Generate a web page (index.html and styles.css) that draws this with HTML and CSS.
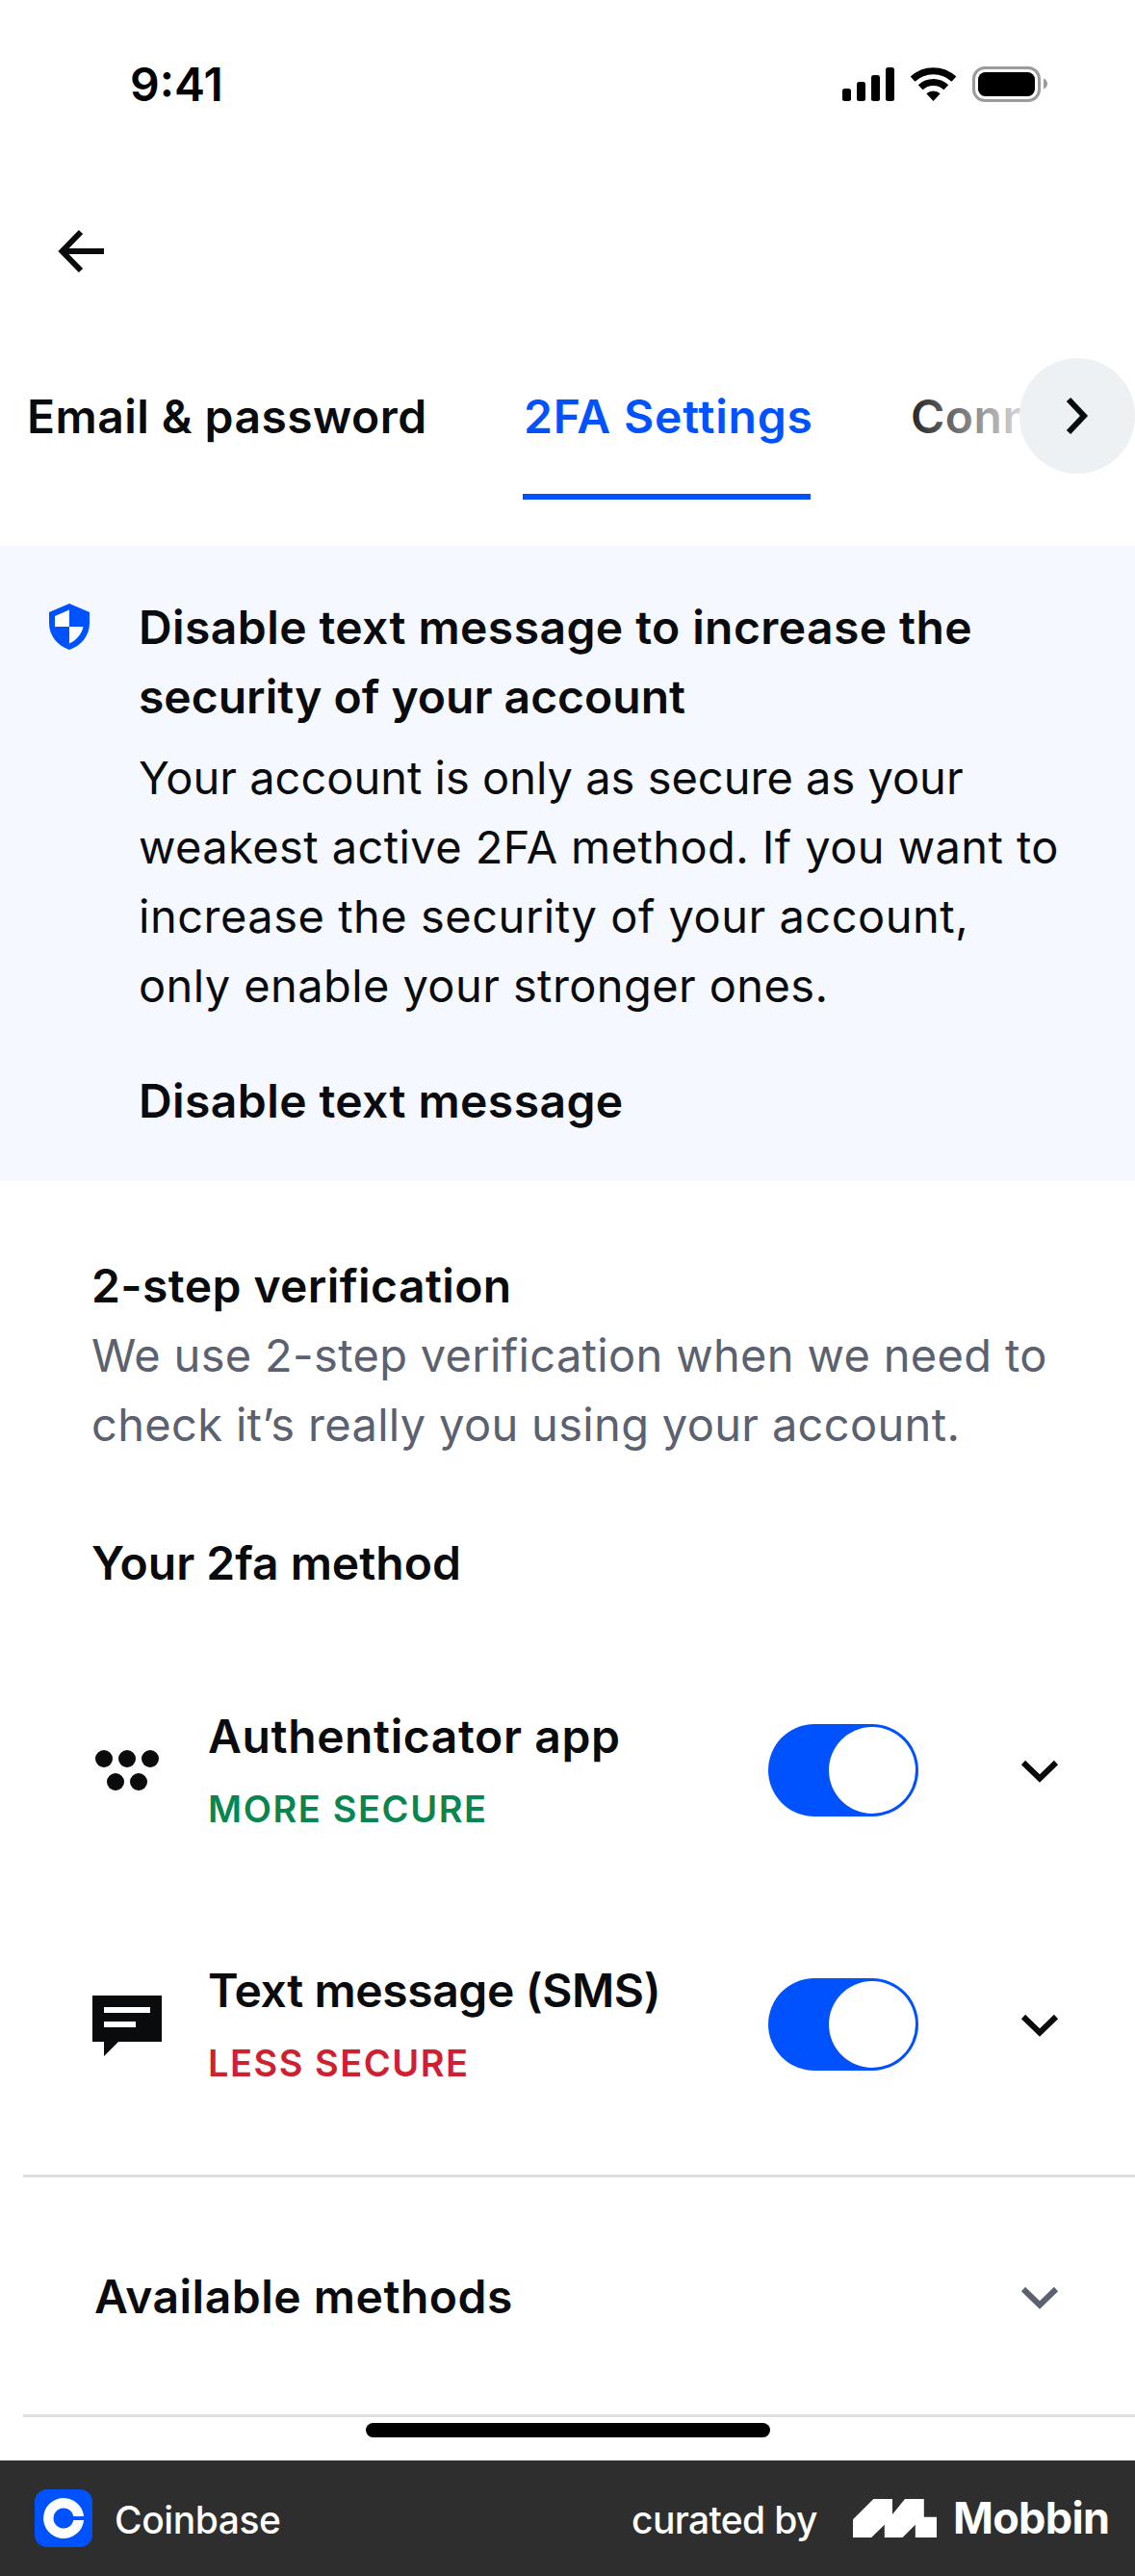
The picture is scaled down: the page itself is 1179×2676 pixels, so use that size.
FILE: index.html
```html
<!DOCTYPE html>
<html lang="en">
<head>
<meta charset="utf-8">
<title>2FA Settings</title>
<link rel="stylesheet" href="styles.css">
</head>
<body>
<div class="screen">
  <header class="status">
    <span class="time">9:41</span>
    <svg class="status-icons" viewBox="875 69 214 37" aria-hidden="true">
      <rect x="875" y="92" width="9" height="13" rx="2.5"/>
      <rect x="890" y="85" width="9" height="20" rx="2.5"/>
      <rect x="905" y="78" width="9" height="27" rx="2.5"/>
      <rect x="920" y="70" width="9" height="35" rx="2.5"/>
      <path d="M948.1 82.1A31.3 31.3 0 0 1 990.9 82.1" fill="none" stroke="#000" stroke-width="7"/>
      <path d="M956.2 90.7A19.5 19.5 0 0 1 982.8 90.7" fill="none" stroke="#000" stroke-width="7"/>
      <path d="M962.3 97.3A10.5 10.5 0 0 1 976.7 97.3L969.5 105Z"/>
      <rect x="1011.5" y="70.5" width="68" height="34" rx="11.5" fill="none" stroke="#9b9b9b" stroke-width="3"/>
      <rect x="1016" y="75" width="59" height="25" rx="7.5"/>
      <path d="M1084 81.5Q1088 83.500 1088 87T1084 92.500Z" fill="#9b9b9b"/>
    </svg>
  </header>

  <nav class="nav">
    <svg class="back" viewBox="60 237 48 48" aria-label="Back">
      <path d="M84 241L64.500 261L84 281M66 261H108" fill="none" stroke="#0a0b0d" stroke-width="6"/>
    </svg>
  </nav>

  <div class="tabs">
    <span class="tab tab-email">Email &amp; password</span>
    <span class="tab tab-active">2FA Settings</span>
    <span class="tab tab-next">Conn</span>
    <span class="tabs-fade"></span>
    <button class="tabs-more" aria-label="More tabs">
      <svg viewBox="0 0 120 120"><path d="M51 43L67 60L51 77" fill="none" stroke="#0a0b0d" stroke-width="6"/></svg>
    </button>
  </div>

  <section class="banner">
    <svg class="shield" viewBox="0 0 42 48" aria-hidden="true">
      <path d="M21 0L42 9V20C42 33.500 33.500 43.500 21 48C8.500 43.500 0 33.500 0 20V9Z" fill="#0052ff"/>
      <path d="M21 6.500V24H6V13ZM21 24H35.500C34 31.500 29 37.500 21 41.500Z" fill="#fff"/>
    </svg>
    <div class="banner-text">
      <h2 class="strong"><span class="line ls-40">Disable text message to increase the</span> <span class="line ls-0">security of your account</span></h2>
      <p class="banner-body">
        <span class="line ls-0">Your account is only as secure as your</span>
        <span class="line ls-40">weakest active 2FA method. If you want to</span>
        <span class="line ls-50">increase the security of your account,</span>
        <span class="line ls-40">only enable your stronger ones.</span>
      </p>
      <a class="strong ls-40">Disable text message</a>
    </div>
  </section>

  <section class="intro">
    <h2 class="strong ls-40">2-step verification</h2>
    <p class="muted">
      <span class="line ls-30">We use 2-step verification when we need to</span>
      <span class="line ls-30">check it’s really you using your account.</span>
    </p>
    <h2 class="strong intro-method ls-0">Your 2fa method</h2>
  </section>

  <div class="methods">
    <div class="method">
      <svg class="method-icon" viewBox="0 0 72 72" aria-hidden="true">
        <circle cx="12" cy="24" r="9"/><circle cx="36" cy="24" r="9"/><circle cx="60" cy="24" r="9"/>
        <circle cx="24" cy="48" r="9"/><circle cx="48" cy="48" r="9"/>
      </svg>
      <div class="method-text">
        <div class="strong ls-60">Authenticator app</div>
        <div class="tag tag-more">MORE SECURE</div>
      </div>
      <span class="toggle"><span class="knob"></span></span>
      <svg class="chevron" viewBox="0 0 72 72"><path d="M19 28L36 44.500L53 28"/></svg>
    </div>
    <div class="method">
      <svg class="method-icon" viewBox="0 0 72 72" aria-hidden="true">
        <path d="M0 6H72V54H27L12 69V54H0Z"/>
        <path d="M12 18H60V24H12ZM12 33H45V39H12Z" fill="#fff"/>
      </svg>
      <div class="method-text">
        <div class="strong ls-tight">Text message (SMS)</div>
        <div class="tag tag-less">LESS SECURE</div>
      </div>
      <span class="toggle"><span class="knob"></span></span>
      <svg class="chevron" viewBox="0 0 72 72"><path d="M19 28L36 44.500L53 28"/></svg>
    </div>
  </div>

  <div class="available">
    <span class="strong ls-50">Available methods</span>
    <svg class="chevron chevron-muted" viewBox="0 0 72 72"><path d="M19 28L36 44.500L53 28"/></svg>
  </div>

  <div class="home-bar"></div>

  <footer class="footer">
    <svg class="app-icon" viewBox="0 0 60 60" aria-hidden="true">
      <rect width="60" height="60" rx="13" fill="#0052ff"/>
      <path d="M51 28A21 21 0 1 0 51 32H40.300A10.500 10.500 0 1 1 40.300 28Z" fill="#fff"/>
    </svg>
    <span class="app-name">Coinbase</span>
    <span class="curated">curated by</span>
    <svg class="mobbin-mark" viewBox="886 2596 87 40" aria-hidden="true">
      <path d="M886 2617.300L907.300 2596H927V2612L940 2596H959.800V2614.700H973V2636H950.800V2622.700L937.600 2636H918.800V2622.700L905.200 2636H886Z" fill="#fff"/>
    </svg>
    <span class="mobbin">Mobbin</span>
  </footer>
</div>
</body>
</html>
```
FILE: styles.css
```css
* { box-sizing: border-box; }

body {
  margin: 0;
  background: #fff;
  color: #0a0b0d;
  font-family: Inter, "Liberation Sans", sans-serif;
  font-size: 47px;
  line-height: 72px;
}

h2, p { margin: 0; }
svg { display: block; flex: none; }

.screen {
  display: flex;
  flex-direction: column;
  width: 1179px;
  height: 2676px;
  overflow: hidden;
}

/* Type helpers */
.strong { font-size: 48px; font-weight: 600; white-space: nowrap; }
.line { display: block; white-space: nowrap; }
.ls-tight { letter-spacing: -0.4px; }
.ls-0 { letter-spacing: 0; }
.ls-30 { letter-spacing: 0.33px; }
.ls-40 { letter-spacing: 0.41px; }
.ls-50 { letter-spacing: 0.51px; }
.ls-60 { letter-spacing: 0.6px; }

/* Status bar */
.status {
  display: flex;
  align-items: center;
  justify-content: space-between;
  height: 175px;
  padding: 0 90px 0 135px;
  color: #000;
}
.time { font-size: 48px; font-weight: 600; }
.status-icons { width: 214px; height: 37px; }

.nav { height: 197px; padding: 62px 60px 0; }
.back { width: 48px; height: 48px; }

/* Tabs */
.tabs {
  position: relative;
  display: flex;
  height: 195px;
  padding-left: 28px;
}
.tab {
  height: 147px;
  padding-top: 25px;
  font-size: 48px;
  font-weight: 600;
  white-space: nowrap;
}
.tab-email { width: 515px; letter-spacing: 0.45px; }
.tab-active {
  width: 299px;
  padding-left: 1px;
  border-bottom: 6px solid #0052ff;
  color: #0052ff;
  letter-spacing: 0.8px;
}
.tab-next { margin-left: 104px; letter-spacing: 0.5px; }
.tabs-fade {
  position: absolute;
  top: 0;
  right: 0;
  width: 250px;
  height: 140px;
  background: linear-gradient(to right, rgba(255, 255, 255, 0), rgba(255, 255, 255, 0.8) 50%, #fff);
}
.tabs-more {
  position: absolute;
  top: 0;
  right: 0;
  width: 120px;
  height: 120px;
  padding: 0;
  border: 0;
  border-radius: 50%;
  background: #eef1f4;
}

/* Banner */
.banner {
  display: flex;
  height: 660px;
  padding: 49px 0 0 51px;
  background: #f5f8ff;
}
.shield { width: 42px; height: 48px; margin-top: 11px; }
.banner-text { display: flex; flex-direction: column; margin-left: 51px; }
.banner-body { margin: 12px 0 48px; }

/* Intro */
.intro { padding: 73px 0 0 95px; }
.muted { color: #5b616e; }
.intro-method { margin-top: 72px; }

/* Methods */
.methods { padding: 47px 0 24px; }
.method {
  display: flex;
  align-items: center;
  height: 264px;
  padding: 0 63px 0 96px;
}
.method-icon { width: 72px; height: 72px; fill: #0a0b0d; }
.method-text { align-self: flex-start; width: 582px; margin-left: 48px; padding-top: 61px; }
.tag {
  margin-top: 15px;
  font-size: 38px;
  font-weight: 600;
  line-height: 48px;
  white-space: nowrap;
}
.tag-more { color: #098551; letter-spacing: 1.6px; }
.tag-less { color: #cf202f; letter-spacing: 1.5px; }
.toggle {
  display: flex;
  justify-content: flex-end;
  flex: none;
  width: 156px;
  height: 96px;
  padding: 3px;
  margin-right: 90px;
  border-radius: 48px;
  background: #0052ff;
}
.knob {
  width: 90px;
  height: 90px;
  border-radius: 50%;
  background: #fff;
  box-shadow: 0 12px 24px rgba(0, 0, 0, 0.02);
}
.chevron { width: 72px; height: 72px; fill: none; stroke: #0a0b0d; stroke-width: 6; }
.chevron-muted { stroke: #5b616e; }

/* Available methods */
.available {
  display: flex;
  align-items: center;
  justify-content: space-between;
  height: 252px;
  margin-left: 24px;
  padding: 2px 63px 0 74px;
  border-top: 3px solid #dedfe0;
  border-bottom: 3px solid #dedfe0;
}

.home-bar {
  width: 420px;
  height: 15px;
  margin: 6px auto 24px;
  border-radius: 8px;
  background: #000;
}

/* Footer */
.footer {
  display: flex;
  align-items: center;
  height: 120px;
  padding-left: 36px;
  background: #2e2e2e;
  color: #fff;
  white-space: nowrap;
}
.app-icon { width: 60px; height: 60px; }
.app-name { width: 537px; margin-left: 23px; font-size: 39px; font-weight: 500; letter-spacing: -0.44px; }
.curated { width: 230px; font-size: 39px; font-weight: 500; letter-spacing: -0.63px; }
.app-name, .curated { padding-top: 3px; }
.mobbin-mark { width: 87px; height: 40px; }
.mobbin { margin-left: 17px; font-size: 45px; font-weight: 700; letter-spacing: -0.7px; }
```
